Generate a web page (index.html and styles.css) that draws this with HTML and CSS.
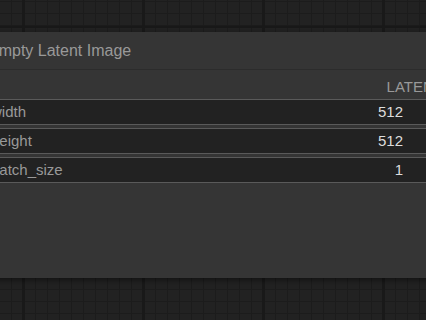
FILE: index.html
```html
<!DOCTYPE html>
<html lang="en">
<head>
    <meta charset="UTF-8">
    <meta name="viewport" content="width=device-width, initial-scale=1.0">
    <title>Empty Latent Image</title>
    <link rel="stylesheet" href="styles.css">
</head>
<body>
    <div class="canvas">
        <div class="node">
            <div class="node-title">Empty Latent Image</div>
            <div class="node-outputs">
                <span class="output-label">LATENT</span>
            </div>
            <div class="widgets">
                <div class="widget">
                    <span class="widget-label">width</span>
                    <span class="widget-value">512</span>
                </div>
                <div class="widget">
                    <span class="widget-label">height</span>
                    <span class="widget-value">512</span>
                </div>
                <div class="widget">
                    <span class="widget-label">batch_size</span>
                    <span class="widget-value">1</span>
                </div>
            </div>
        </div>
    </div>
</body>
</html>
```

FILE: styles.css
```css
html, body {
    margin: 0;
    height: 100%;
}

body {
    font-family: "Liberation Sans", Arial, sans-serif;
    overflow: hidden;
}

.canvas {
    height: 320px;
    padding-top: 32px;
    box-sizing: border-box;
    overflow: hidden;
    background-color: #222;
    background-image:
        linear-gradient(to right, #191919 3px, transparent 3px),
        linear-gradient(to bottom, #191919 2px, transparent 2px),
        linear-gradient(to right, #1c1c1c 1px, transparent 1px),
        linear-gradient(to bottom, #1c1c1c 1px, transparent 1px);
    background-size: 120px 120px, 120px 120px, 12px 12px, 12px 12px;
    background-position: 22px 0, 0 26px, 11px 0, 0 13px;
}

.node {
    margin-left: -40px;
    width: 510px;
    height: 246px;
    background: #353535;
    box-shadow: 0 2px 6px rgba(0, 0, 0, 0.5);
}

.node-title {
    height: 37px;
    line-height: 37px;
    padding-left: 28px;
    font-size: 16px;
    color: #999;
    border-bottom: 1px solid #2c2c2c;
}

.node-outputs {
    height: 21px;
    padding-top: 8px;
    display: flex;
    justify-content: flex-end;
    padding-right: 27px;
}

.output-label {
    font-size: 15px;
    line-height: 17px;
    color: #999;
}

.widgets {
    display: flex;
    flex-direction: column;
    gap: 3px;
    padding: 0 15px;
}

.widget {
    height: 24px;
    display: flex;
    justify-content: space-between;
    align-items: center;
    padding: 0 51px 0 15px;
    background: #222;
    border: 1px solid #5a5a5a;
    border-radius: 12px;
    font-size: 15px;
    line-height: 24px;
}

.widget-label {
    color: #999;
}

.widget-value {
    color: #ddd;
}
```
